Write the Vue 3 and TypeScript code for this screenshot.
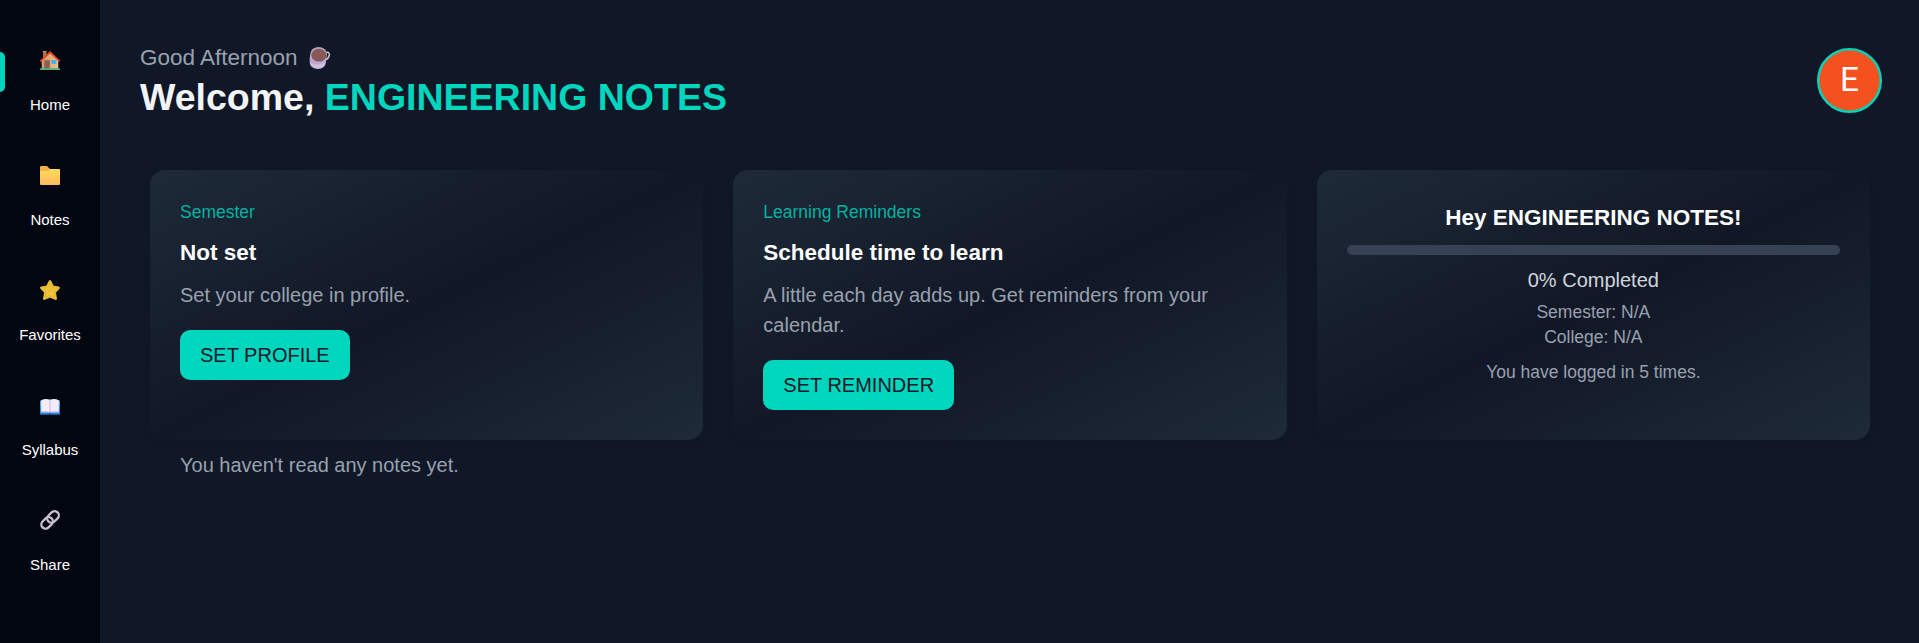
<script setup lang="ts">
import { ref } from 'vue'

type IconName = 'home' | 'notes' | 'favorites' | 'syllabus' | 'share'
interface NavItem { icon: IconName; label: string }

const userName = 'ENGINEERING NOTES'
const nav: NavItem[] = [
  { icon: 'home', label: 'Home' },
  { icon: 'notes', label: 'Notes' },
  { icon: 'favorites', label: 'Favorites' },
  { icon: 'syllabus', label: 'Syllabus' },
  { icon: 'share', label: 'Share' },
]
const active = ref<string>('Home')
const progress = ref<number>(0)
const logins = ref<number>(5)
</script>

<template>
  <div class="page">
    <nav class="sidebar">
      <a v-for="item in nav" :key="item.label" class="nav-item" @click="active = item.label">
        <span v-if="active === item.label" class="marker"></span>
        <svg v-if="item.icon === 'home'" class="nav-icon" viewBox="0 -1 20 20">
          <defs>
            <linearGradient id="wall" x1="0" x2="1"><stop offset="0" stop-color="#d99a62" /><stop offset="1" stop-color="#efbf90" /></linearGradient>
          </defs>
          <rect x="3" y="0.4" width="3.4" height="7" fill="#a9714a" />
          <rect x="2.7" y="0" width="4" height="1.2" fill="#c98a5c" />
          <path d="M1.7 9.6 10 2l8.3 7.6V18H1.7z" fill="url(#wall)" />
          <rect x="4.2" y="9.2" width="5.6" height="8.6" fill="#8b5e57" />
          <rect x="11.6" y="9" width="4.6" height="4" fill="#3db5f5" />
          <path d="M0.9 9.8 10 1.1l9.1 8.7" fill="none" stroke="#e8492f" stroke-width="1.7" stroke-linecap="round" stroke-linejoin="round" />
          <rect x="0" y="17.2" width="20" height="1.8" rx=".6" fill="#46b873" />
        </svg>
        <svg v-else-if="item.icon === 'notes'" class="nav-icon" viewBox="0 0 20 20">
          <defs>
            <linearGradient id="folder" x1="0" y1="0" x2="0" y2="1"><stop offset="0" stop-color="#ffdb59" /><stop offset="1" stop-color="#ffb860" /></linearGradient>
          </defs>
          <path d="M0 2.2Q0 1 1.2 1H7L10 4V8H0z" fill="#f3b046" />
          <path d="M0 6H7.6L10.2 4H19Q20 4 20 5V18.9Q20 20 18.9 20H1.1Q0 20 0 18.9z" fill="url(#folder)" />
        </svg>
        <svg v-else-if="item.icon === 'favorites'" class="nav-icon" viewBox="0 0 20 20">
          <defs>
            <radialGradient id="star"><stop offset="0" stop-color="#e9bd35" /><stop offset=".65" stop-color="#f2c83d" /><stop offset="1" stop-color="#dda52c" /></radialGradient>
          </defs>
          <path d="M10 1.4 12.8 6.8 18.6 7.8 14.6 12.2 15.7 18.6 10 16.2 4.3 18.6 5.4 12.2 1.4 7.8 7.2 6.8z" fill="url(#star)" stroke="#e8bb33" stroke-width="2.6" stroke-linejoin="round" />
        </svg>
        <svg v-else-if="item.icon === 'syllabus'" class="nav-icon" viewBox="0 0 20 20">
          <defs>
            <linearGradient id="cover" x1="0" y1="0" x2="0" y2="1"><stop offset="0" stop-color="#68bdf0" /><stop offset="1" stop-color="#2276d2" /></linearGradient>
          </defs>
          <rect x="0" y="5.4" width="20" height="14.4" rx="1" fill="url(#cover)" />
          <path d="M1.2 5.2Q5.5 3.2 10 4.8 14.5 3.2 18.8 5.2V17.2H1.2z" fill="#f2edf9" />
          <path d="M1.2 16H18.8V17.4H1.2z" fill="#cfc5e2" />
          <path d="M9.3 4.7h1.4v12.7H9.3z" fill="#d1c4e4" />
          <rect x="9.2" y="18" width="1.6" height="2.2" fill="#164c9e" />
        </svg>
        <svg v-else class="nav-icon" viewBox="0 0 20 20">
          <g fill="none" stroke="#cdbfd1" stroke-width="2.3" transform="rotate(-45 10 10)">
            <rect x="-.5" y="5.8" width="12.8" height="8.4" rx="4.2" />
            <rect x="7.9" y="5.8" width="12.8" height="8.4" rx="4.2" />
          </g>
        </svg>
        <span class="nav-label">{{ item.label }}</span>
      </a>
    </nav>

    <main class="main">
      <header class="header">
        <div>
          <p class="greeting">
            Good Afternoon
            <svg class="cup" viewBox="0 0 22 22">
              <path d="M16 6.2Q20.6 3.8 20.3 8 19.6 12 16 13" fill="none" stroke="#cdbfe0" stroke-width="1.5" />
              <path d="M1.4 7Q2 .2 9.5 .2 17.5.4 17.6 7.6L17 15.5Q16 22 9 22 1 21.6 .6 15.2 .4 11 1.4 7z" fill="#bca7d2" />
              <path d="M1 15.5Q8 20 16.4 15 15.5 21.4 9 21.4 1.8 21 1 15.5z" fill="#cfbfe0" />
              <ellipse cx="9.8" cy="7.4" rx="8.1" ry="7.2" fill="#b9a3b8" />
              <ellipse cx="9.9" cy="8.2" rx="7.5" ry="6.4" fill="#875957" />
            </svg>
          </p>
          <h1 class="welcome">Welcome, <span class="name">{{ userName }}</span></h1>
        </div>
        <div class="avatar">E</div>
      </header>

      <section class="cards">
        <article class="card">
          <p class="eyebrow">Semester</p>
          <h2 class="title">Not set</h2>
          <p class="text">Set your college in profile.</p>
          <button class="btn">SET PROFILE</button>
        </article>
        <article class="card">
          <p class="eyebrow">Learning Reminders</p>
          <h2 class="title">Schedule time to learn</h2>
          <p class="text">A little each day adds up. Get reminders from your calendar.</p>
          <button class="btn">SET REMINDER</button>
        </article>
        <article class="card summary">
          <h2 class="title">Hey {{ userName }}!</h2>
          <div class="track"><div class="fill" :style="{ width: progress + '%' }"></div></div>
          <p class="completed">{{ progress }}% Completed</p>
          <p class="meta">Semester: N/A</p>
          <p class="meta">College: N/A</p>
          <p class="meta logins">You have logged in {{ logins }} times.</p>
        </article>
      </section>
      <p class="empty">You haven't read any notes yet.</p>
    </main>
  </div>
</template>

<style>
body { background: #101726; overflow: hidden; }
</style>

<style scoped>
.page { display: flex; height: 643px; background: #101726; color: #fff; font-family: "Liberation Sans", Arial, sans-serif; font-size: 20px; line-height: 30px; }
.page * { box-sizing: border-box; }
p, h1, h2 { margin: 0; }
.sidebar { width: 100px; flex: none; background: #020610; padding-top: 15px; }
.nav-item { position: relative; height: 115px; display: flex; flex-direction: column; align-items: center; padding-top: 35px; cursor: pointer; }
.marker { position: absolute; left: 0; top: 37px; width: 5px; height: 40px; background: #00d5be; border-radius: 0 5px 5px 0; }
.nav-icon { width: 20px; height: 20px; display: block; }
.nav-label { margin-top: 25px; font-size: 15px; line-height: 20px; }
.main { flex: 1; min-width: 0; padding: 40px 37px 0 40px; }
.header { display: flex; justify-content: space-between; height: 130px; }
.greeting { display: flex; align-items: center; gap: 11px; font-size: 22.5px; line-height: 35px; color: #99a1af; }
.cup { width: 22px; height: 22px; }
.welcome { font-size: 37.5px; line-height: 45px; font-weight: 700; color: #f3f4f6; white-space: nowrap; }
.name { color: #00d5be; }
.avatar { width: 65px; height: 65px; margin-top: 7.5px; flex: none; border: 2px solid #00d5be; box-shadow: inset 0 0 0 .6px #00d5be; border-radius: 50%; background: #f4511e; display: flex; align-items: center; justify-content: center; font-family: Roboto, sans-serif; font-size: 33.5px; }
.cards { display: grid; grid-template-columns: repeat(3, 1fr); gap: 30px; margin: 0 12px 0 10px; }
.card { height: 270px; padding: 30px; border-radius: 15px; background: linear-gradient(to bottom right, #1e2a38, #111726, #1e2a38); box-shadow: 0 5px 12px rgba(0, 0, 0, .07); }
.eyebrow { font-size: 17.5px; line-height: 25px; color: #00d5be; opacity: .8; }
.title { font-size: 22.5px; line-height: 35px; font-weight: 700; margin-top: 10px; }
.text { color: #99a1af; margin-top: 10px; }
.btn { display: block; height: 50px; margin-top: 20px; padding: 0 20px; border: 0; border-radius: 10px; background: #00d5be; color: #111827; font: inherit; }
.summary { text-align: center; }
.summary .title { margin-top: 0; }
.track { height: 10px; margin-top: 10px; background: #364153; border-radius: 5px; overflow: hidden; }
.fill { height: 100%; background: #00d5be; }
.completed { margin-top: 10px; color: #d1d5dc; }
.meta { font-size: 17.5px; line-height: 25px; color: #99a1af; }
.completed + .meta { margin-top: 5px; }
.logins { margin-top: 10px; }
.empty { margin: 10px 0 0 40px; color: #99a1af; }
</style>
